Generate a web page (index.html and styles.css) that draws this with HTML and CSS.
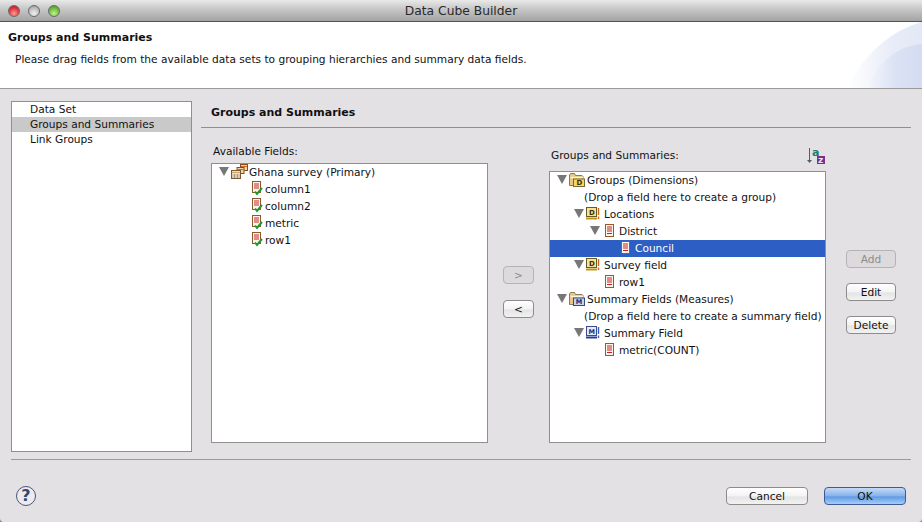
FILE: index.html
```html
<!DOCTYPE html>
<html lang="en">
<head>
<meta charset="UTF-8" />
<meta name="viewport" content="width=device-width, initial-scale=1" />
<title>Data Cube Builder</title>
<link rel="stylesheet" href="styles.css">
</head>
<body>

<svg class="defs" width="0" height="0">
  <defs>
    <symbol id="i-field" viewBox="0 0 9 13">
      <rect x="0.5" y="0.5" width="8" height="12" fill="#fbf6ea" stroke="#9a5a24"/>
      <path d="M2 3h5M2 5h5M2 7h5M2 9.5h5" stroke="#c8202a" stroke-width="1.2"/>
    </symbol>
    <symbol id="i-check" viewBox="0 0 13 15">
      <rect x="0.5" y="0.5" width="8" height="11" fill="#fbf6ea" stroke="#8a5a2a"/>
      <path d="M2 3h5M2 5h5M2 7h5" stroke="#c8202a"/>
      <path d="M3 10.500l2 2.500 5-6" fill="none" stroke="#1f9a2e" stroke-width="2"/>
    </symbol>
    <symbol id="i-sets" viewBox="0 0 17 15">
      <rect x="9.5" y="0.5" width="7" height="6" fill="#f0d6a4" stroke="#8a4a1c"/>
      <path d="M10 2.5h6" stroke="#c86a24"/>
      <rect x="6" y="3.5" width="7" height="6" fill="#f0d6a4" stroke="#8a4a1c"/>
      <path d="M6.5 5.5h6" stroke="#c86a24"/>
      <rect x="0.5" y="6.5" width="9" height="8" fill="#f7eeda" stroke="#7a5a34"/>
      <path d="M1 8.5h8" stroke="#d8a25c" stroke-width="1.4"/>
      <path d="M1 11h8M1 13h8M3.5 10v4M6.5 10v4" stroke="#8a7a60" stroke-width="0.6"/>
    </symbol>
    <symbol id="i-folder" viewBox="0 0 16 14">
      <path d="M0.5 12.5V2l1-1.5h4l1 2h6.5l1 1v9z" fill="#e8c884" stroke="#8a7a5a"/>
      <path d="M1.5 4.5h12.5" stroke="#fdf6de" stroke-width="1.4"/>
      <rect x="4.5" y="6" width="11" height="7.5" fill="#f4d860" stroke="#7a6a30"/>
      <text x="7.5" y="12.4" class="ico-text">D</text>
    </symbol>
    <symbol id="i-folder-m" viewBox="0 0 16 14">
      <path d="M0.5 12.5V2l1-1.5h4l1 2h6.5l1 1v9z" fill="#e8c884" stroke="#8a7a5a"/>
      <path d="M1.5 4.5h12.5" stroke="#fdf6de" stroke-width="1.4"/>
      <rect x="4.5" y="6" width="11" height="7.5" fill="#c8d4f0" stroke="#3a4a7a"/>
      <text x="6.8" y="12.4" class="ico-text navy">M</text>
    </symbol>
    <symbol id="i-dim" viewBox="0 0 14 13">
      <rect x="0.5" y="0.5" width="10" height="9" fill="#f6e39a" stroke="#6a5a20"/>
      <text x="3" y="8" class="ico-text">D</text>
      <path d="M0 11.5h11" stroke="#c09418" stroke-width="2"/>
      <path d="M12.5 1v7M12.5 9.5v2.500" stroke="#d0641a" stroke-width="1.4"/>
    </symbol>
    <symbol id="i-measure" viewBox="0 0 14 13">
      <rect x="0.5" y="0.500" width="10" height="9" fill="#e6eaf8" stroke="#3a4a8a"/>
      <text x="2.400" y="8" class="ico-text navy">M</text>
      <path d="M0 11.5h11" stroke="#2a3a9a" stroke-width="2"/>
      <path d="M12.5 1v7M12.5 9.5v2.500" stroke="#3a5ac8" stroke-width="1.4"/>
    </symbol>
  </defs>
</svg>

<div class="window">

  <div class="titlebar">
    <div class="lights">
      <span class="light red"></span>
      <span class="light grey"></span>
      <span class="light green"></span>
    </div>
    <div class="window-title">Data Cube Builder</div>
  </div>

  <div class="banner">
    <svg class="swoosh" width="74" height="66" viewBox="0 0 74 66">
      <defs>
        <linearGradient id="sw" x1="0" x2="1" y1="0" y2="0">
          <stop offset="0" stop-color="#fff"/>
          <stop offset="0.6" stop-color="#e8ecf8"/>
          <stop offset="1" stop-color="#e3e8f6"/>
        </linearGradient>
        <linearGradient id="sw2" x1="0" x2="1" y1="0" y2="0">
          <stop offset="0" stop-color="#f4f6fc"/>
          <stop offset="0.5" stop-color="#dbe2f4"/>
          <stop offset="1" stop-color="#d4dcf2"/>
        </linearGradient>
      </defs>
      <path d="M0 66C12 38 38 10 74 0V66z" fill="url(#sw)"/>
      <path d="M20 66C28 42 48 24 74 22V66z" fill="url(#sw2)"/>
    </svg>
    <h1 class="banner-title">Groups and Summaries</h1>
    <p class="banner-text">Please drag fields from the available data sets to grouping hierarchies and summary data fields.</p>
  </div>

  <div class="content">
    <ul class="nav">
      <li>Data Set</li>
      <li class="active">Groups and Summaries</li>
      <li>Link Groups</li>
    </ul>

    <div class="page">
      <h2 class="page-title">Groups and Summaries</h2>

      <div class="columns">
        <div class="col col-left">
          <div class="col-label">Available Fields:</div>
          <div class="tree">
            <div class="row"><span class="twist"></span><svg class="ico" width="17" height="15"><use href="#i-sets"/></svg>Ghana survey (Primary)</div>
            <div class="row ind2"><svg class="ico check" width="13" height="15"><use href="#i-check"/></svg>column1</div>
            <div class="row ind2"><svg class="ico check" width="13" height="15"><use href="#i-check"/></svg>column2</div>
            <div class="row ind2"><svg class="ico check" width="13" height="15"><use href="#i-check"/></svg>metric</div>
            <div class="row ind2"><svg class="ico check" width="13" height="15"><use href="#i-check"/></svg>row1</div>
          </div>
        </div>

        <div class="move-btns">
          <button class="btn small" disabled>&gt;</button>
          <button class="btn small">&lt;</button>
        </div>

        <div class="col col-right">
          <div class="col-label with-sort">
            <span>Groups and Summaries:</span>
            <svg class="sort" width="20" height="20" viewBox="0 0 20 20">
              <path d="M3.500 1v13" stroke="#50606a"/>
              <path d="M1 13h5l-2.500 3z" fill="#50606a"/>
              <text x="6" y="9" class="sort-a">a</text>
              <rect x="11" y="9" width="8" height="8" fill="#7a2f8f"/>
              <text x="12" y="16" class="sort-z">z</text>
            </svg>
          </div>
          <div class="tree">
            <div class="row"><span class="twist"></span><svg class="ico folder" width="16" height="14"><use href="#i-folder"/></svg>Groups (Dimensions)</div>
            <div class="row note">(Drop a field here to create a group)</div>
            <div class="row ind1"><span class="twist"></span><svg class="ico dim" width="14" height="13"><use href="#i-dim"/></svg>Locations</div>
            <div class="row ind2r"><span class="twist"></span><svg class="ico leaf shifted" width="9" height="13"><use href="#i-field"/></svg>District</div>
            <div class="row ind3r selected"><svg class="ico leaf" width="9" height="13"><use href="#i-field"/></svg>Council</div>
            <div class="row ind1"><span class="twist"></span><svg class="ico dim" width="14" height="13"><use href="#i-dim"/></svg>Survey field</div>
            <div class="row ind2l"><svg class="ico leaf" width="9" height="13"><use href="#i-field"/></svg>row1</div>
            <div class="row"><span class="twist"></span><svg class="ico folder" width="16" height="14"><use href="#i-folder-m"/></svg>Summary Fields (Measures)</div>
            <div class="row note">(Drop a field here to create a summary field)</div>
            <div class="row ind1"><span class="twist"></span><svg class="ico dim" width="14" height="13"><use href="#i-measure"/></svg>Summary Field</div>
            <div class="row ind2l"><svg class="ico leaf" width="9" height="13"><use href="#i-field"/></svg>metric(COUNT)</div>
          </div>
        </div>

        <div class="side-btns">
          <button class="btn" disabled>Add</button>
          <button class="btn">Edit</button>
          <button class="btn">Delete</button>
        </div>
      </div>
    </div>
  </div>

  <div class="footer">
    <div class="help">?</div>
    <div class="footer-btns">
      <button class="btn wide">Cancel</button>
      <button class="btn wide primary">OK</button>
    </div>
  </div>

</div>

</body>
</html>
```

FILE: styles.css
```css
* {
  box-sizing: border-box;
}
html {
  background: #8a8a8a;
}
body {
  margin: 0;
  font-family: "DejaVu Sans", sans-serif;
  font-size: 10.6px;
  color: #111;
}
.defs {
  position: absolute;
}
.window {
  width: 922px;
  height: 522px;
  display: flex;
  flex-direction: column;
  background: #e3e1e4;
  border-radius: 0 0 4px 4px;
  overflow: hidden;
}

/* title bar */
.titlebar {
  height: 22px;
  flex: none;
  display: flex;
  align-items: center;
  background: linear-gradient(#e9e9e9, #c9c9c9 40%, #a3a3a3);
  border-bottom: 1px solid #525252;
}
.lights {
  display: flex;
  gap: 8px;
  padding-left: 8px;
  width: 0;
}
.light {
  flex: none;
  width: 12px;
  height: 12px;
  border-radius: 50%;
  border: 1px solid #6b6b6b;
}
.red {
  background: radial-gradient(circle at 50% 75%, #ff9a96, #e0333a 60%, #a3161c);
}
.grey {
  background: radial-gradient(circle at 50% 75%, #f0f0f0, #bdbdbd 60%, #8e8e8e);
}
.green {
  background: radial-gradient(circle at 50% 75%, #c4f08c, #6cba3e 60%, #3f8a22);
}
.window-title {
  flex: 1;
  margin-left: -8px;
  text-align: center;
  font-size: 12.3px;
  color: #2a2a2a;
}

/* banner */
.banner {
  position: relative;
  height: 67px;
  flex: none;
  padding: 8px 8px 0;
  background: #fff;
  border-bottom: 1px solid #9a9a9a;
}
.swoosh {
  position: absolute;
  right: 0;
  top: 0;
}
.banner-title {
  position: relative;
  margin: 0;
  font-size: 11px;
  line-height: 15px;
  font-weight: bold;
}
.banner-text {
  position: relative;
  margin: 7px 0 0 7px;
  line-height: 15px;
}

/* main area */
.content {
  flex: none;
  height: 363px;
  display: flex;
  padding: 12px 11px 0;
  gap: 9px;
}
.nav {
  list-style: none;
  margin: 0;
  padding: 0;
  width: 181px;
  height: 351px;
  background: #fff;
  border: 1px solid #8f8f8f;
}
.nav li {
  height: 15px;
  line-height: 15px;
  padding-left: 18px;
}
.nav .active {
  background: #c9c9c9;
}
.page {
  flex: 1;
}
.page-title {
  margin: 0;
  height: 27px;
  padding: 4px 0 0 10px;
  font-size: 11px;
  line-height: 15px;
  font-weight: bold;
  border-bottom: 1px solid #8f8f8f;
}
.columns {
  display: flex;
  padding-left: 10px;
}
.col {
  width: 277px;
  height: 315px;
  display: flex;
  flex-direction: column;
  justify-content: flex-end;
}
.col-label {
  height: 19px;
  padding-left: 2px;
  line-height: 15px;
}
.with-sort {
  height: 23px;
  display: flex;
  justify-content: space-between;
  padding-right: 0;
}
.sort {
  margin-top: -1px;
}
.sort-a {
  font: bold 11px "DejaVu Sans", sans-serif;
  fill: #1f7a68;
}
.sort-z {
  font: bold 9px "DejaVu Sans", sans-serif;
  fill: #f0e4f4;
}
.ico-text {
  font: bold 7px "DejaVu Sans", sans-serif;
  fill: #3a3010;
}
.navy {
  font-size: 6.5px;
  fill: #1a2a7a;
}
.tree {
  flex: none;
  background: #fff;
  border: 1px solid #8f8f8f;
  padding-top: 0;
}
.col-left .tree {
  height: 280px;
}
.col-right .tree {
  height: 272px;
}
.row {
  height: 17px;
  display: flex;
  align-items: center;
  padding-left: 7px;
  padding-bottom: 2px;
  white-space: nowrap;
}
.twist {
  flex: none;
  width: 0;
  height: 0;
  margin-right: 2px;
  border-left: 5px solid transparent;
  border-right: 5px solid transparent;
  border-top: 9px solid #777;
}
.ico {
  flex: none;
  margin-right: 1px;
}
.folder {
  margin-right: 2px;
}
.check {
  margin-right: 0;
}
.dim {
  margin-right: 4px;
}
.leaf {
  margin-right: 5px;
}
.shifted {
  margin-left: 3px;
}
.ind1 {
  padding-left: 24px;
}
.ind2 {
  padding-left: 40px;
}
.ind2l {
  padding-left: 55px;
}
.ind2r {
  padding-left: 40px;
}
.ind3r {
  padding-left: 71px;
}
.note {
  padding-left: 34px;
}
.selected {
  background: #2d5ec4;
  color: #fff;
}

/* buttons */
.btn {
  display: block;
  padding: 0;
  height: 18px;
  width: 50px;
  font-family: inherit;
  font-size: 10.6px;
  line-height: 15px;
  color: #111;
  background: linear-gradient(#fff, #f3f3f3 50%, #e4e4e4 55%, #f2f2f2);
  border: 1px solid #8c8c8c;
  border-radius: 4px;
}
.btn[disabled] {
  color: #8c8c8c;
  background: #dcdadd;
  border-color: #b4b4b4;
}
.move-btns {
  width: 61px;
  padding: 138px 0 0 15px;
}
.small {
  width: 31px;
  margin-bottom: 16px;
}
.side-btns {
  padding: 122px 0 0 20px;
}
.side-btns .btn {
  margin-bottom: 15px;
}
.wide {
  width: 82px;
}
.primary {
  background: linear-gradient(#c4daf6, #86b2ea 50%, #5f9ae6 55%, #a8cdf6);
  border-color: #3d5a94;
}

/* footer */
.footer {
  flex: 1;
  margin: 7px 11px 0;
  padding: 17px 0 0 5px;
  border-top: 1px solid #9a9a9a;
  display: flex;
  justify-content: space-between;
}
.help {
  width: 20px;
  height: 20px;
  margin-top: 9px;
  border-radius: 50%;
  border: 1px solid #44587e;
  color: #34476e;
  font-size: 16px;
  font-weight: bold;
  line-height: 18px;
  text-align: center;
  background: #eceaed;
}
.footer-btns {
  display: flex;
  gap: 16px;
  padding: 10px 5px 0 0;
}
```
